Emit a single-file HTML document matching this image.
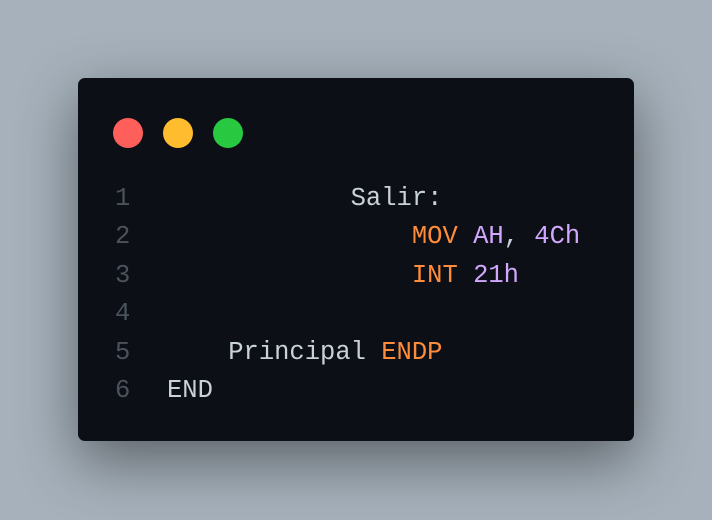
<!DOCTYPE html><html><head><style>
body{margin:0;width:712px;height:520px;background:#a6b1bb;overflow:hidden;position:relative;font-family:"Liberation Mono",monospace}
.card{position:absolute;left:78px;top:78px;width:556px;height:363px;background:#0c0f16;border-radius:7px;box-shadow:0 20px 60px rgba(0,0,0,.45)}
.d{position:absolute;top:40px;width:30px;height:30px;border-radius:50%}
pre{position:absolute;top:102px;margin:0;font:25.5px/38.4px "Liberation Mono",monospace;color:#c9d1d9}
.n{color:#4b525c;left:37px}.c{left:89px}.o{color:#ff8c3a}.p{color:#d2a8ff}
</style></head><body><div class="card">
<div class="d" style="left:35px;background:#ff5f5b"></div>
<div class="d" style="left:85px;background:#febc2e"></div>
<div class="d" style="left:135px;background:#28c840"></div>
<pre class="n">1
2
3
4
5
6</pre>
<pre class="c">            Salir:
                <span class="o">MOV</span> <span class="p">AH</span>, <span class="p">4Ch</span>
                <span class="o">INT</span> <span class="p">21h</span>

    Principal <span class="o">ENDP</span>
END</pre>
</div></body></html>
